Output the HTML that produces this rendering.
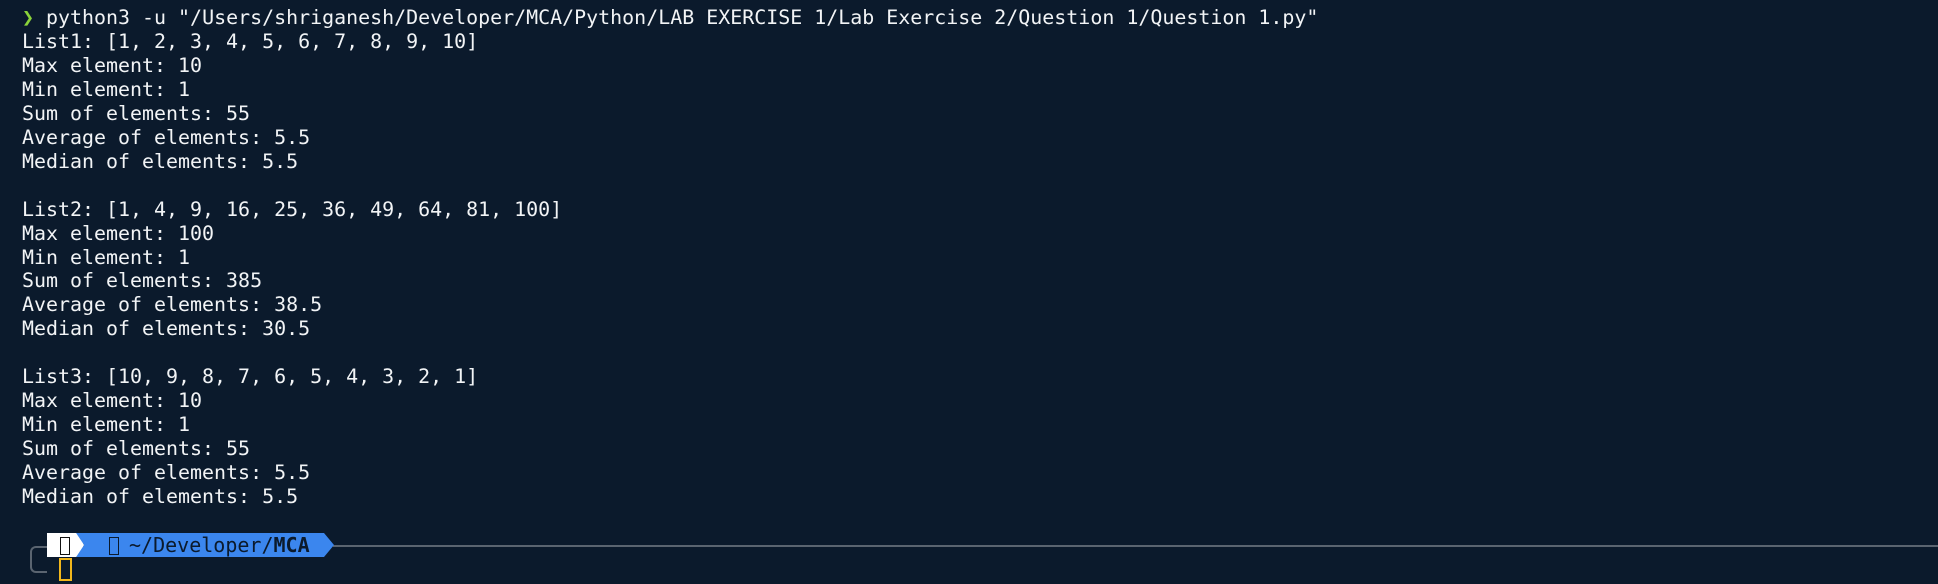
<!DOCTYPE html>
<html><head><meta charset="utf-8"><style>
html,body{margin:0;padding:0;width:1938px;height:584px;overflow:hidden;background:#0b1a2c;}
pre{position:absolute;left:22px;top:6px;margin:0;font-family:"DejaVu Sans Mono","Liberation Mono",monospace;font-size:19.95px;line-height:23.95px;color:#f2f4f6;}
.g{color:#8ad33a;}
.bar{position:absolute;top:533px;height:24px;}
</style></head><body>
<pre><span class="g">❯</span> python3 -u "/Users/shriganesh/Developer/MCA/Python/LAB EXERCISE 1/Lab Exercise 2/Question 1/Question 1.py"
List1: [1, 2, 3, 4, 5, 6, 7, 8, 9, 10]
Max element: 10
Min element: 1
Sum of elements: 55
Average of elements: 5.5
Median of elements: 5.5

List2: [1, 4, 9, 16, 25, 36, 49, 64, 81, 100]
Max element: 100
Min element: 1
Sum of elements: 385
Average of elements: 38.5
Median of elements: 30.5

List3: [10, 9, 8, 7, 6, 5, 4, 3, 2, 1]
Max element: 10
Min element: 1
Sum of elements: 55
Average of elements: 5.5
Median of elements: 5.5</pre>
<div style="position:absolute;left:30px;top:546px;width:15px;height:23px;border:2px solid #5a6470;border-right:none;border-radius:6px 0 0 6px;"></div>
<div style="position:absolute;left:333px;top:545px;width:1605px;height:2px;background:#5a6470;"></div>
<div class="bar" style="left:47px;width:36px;background:#fff;"></div>
<div style="position:absolute;left:60px;top:537px;width:8px;height:16px;border:1.5px solid #111;"></div>
<svg style="position:absolute;left:76px;top:533px" width="258" height="24">
<polygon points="0,0 248,0 258,12 248,24 0,24 8,12" fill="#3b86ee"/>
<polygon points="0,0 8,12 0,24" fill="#fff"/>
</svg>
<div style="position:absolute;left:109px;top:537px;width:8px;height:16px;border:1.5px solid #0b1a2c;"></div>
<div style="position:absolute;left:129px;top:531px;font-family:'DejaVu Sans Mono',monospace;font-size:20px;line-height:28px;color:#0b1a2c;">~/Developer/<b>MCA</b></div>
<div style="position:absolute;left:59px;top:558px;width:9px;height:19px;border:2px solid #f2b71c;"></div>
</body></html>
